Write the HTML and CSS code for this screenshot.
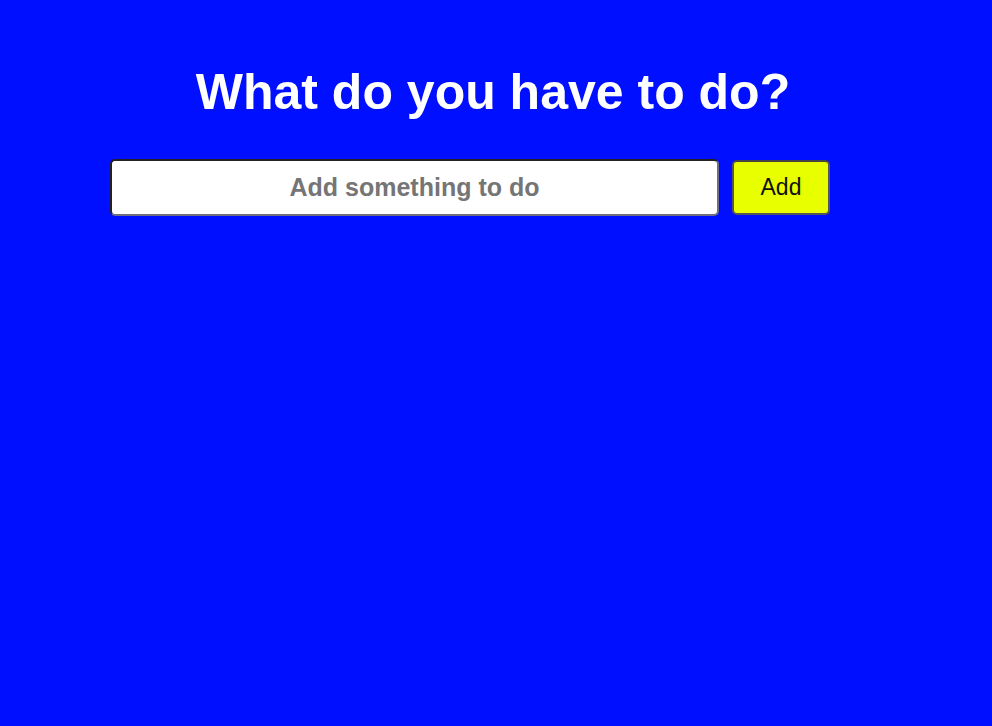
FILE: index.html
```html
<!DOCTYPE html>
<html>
<head>
<meta charset="utf-8">
<link rel="stylesheet" href="styles.css">
</head>
<body>
<div class="app">
  <h1 class="title">What do you have to do?</h1>
  <form class="todo-form">
    <input class="todo-input" type="text" placeholder="Add something to do">
    <button class="add-btn" type="button">Add</button>
  </form>
</div>
</body>
</html>
```
FILE: styles.css
```css
html, body {
  margin: 0;
  padding: 0;
  height: 100%;
}
body {
  background: #000fff;
  font-family: "Liberation Sans", Arial, sans-serif;
}
.app {
  padding-top: 60px;
}
.title {
  margin: 0;
  text-align: center;
  color: #fff;
  font-size: 50px;
  font-weight: bold;
  line-height: 64px;
  padding-right: 6px;
}
.todo-form {
  display: flex;
  align-items: center;
  gap: 13px;
  margin: 35px 0 0 110px;
}
.todo-input {
  box-sizing: border-box;
  width: 609px;
  height: 57px;
  border: 2px solid #6e6e7e;
  border-top-color: #222;
  border-left-color: #222;
  border-radius: 5px;
  background: #fff;
  text-align: center;
  font-family: "Liberation Sans", Arial, sans-serif;
  font-size: 25px;
  font-weight: bold;
  color: #333;
  outline: none;
  padding: 0 4px;
}
.todo-input::placeholder {
  color: #757575;
}
.add-btn {
  box-sizing: border-box;
  width: 98px;
  height: 55px;
  border: 2px solid #555;
  border-top-color: #444;
  border-radius: 5px;
  background: #e8ff00;
  color: #111;
  font-family: "Liberation Sans", Arial, sans-serif;
  font-size: 23px;
  padding: 0;
}
```
